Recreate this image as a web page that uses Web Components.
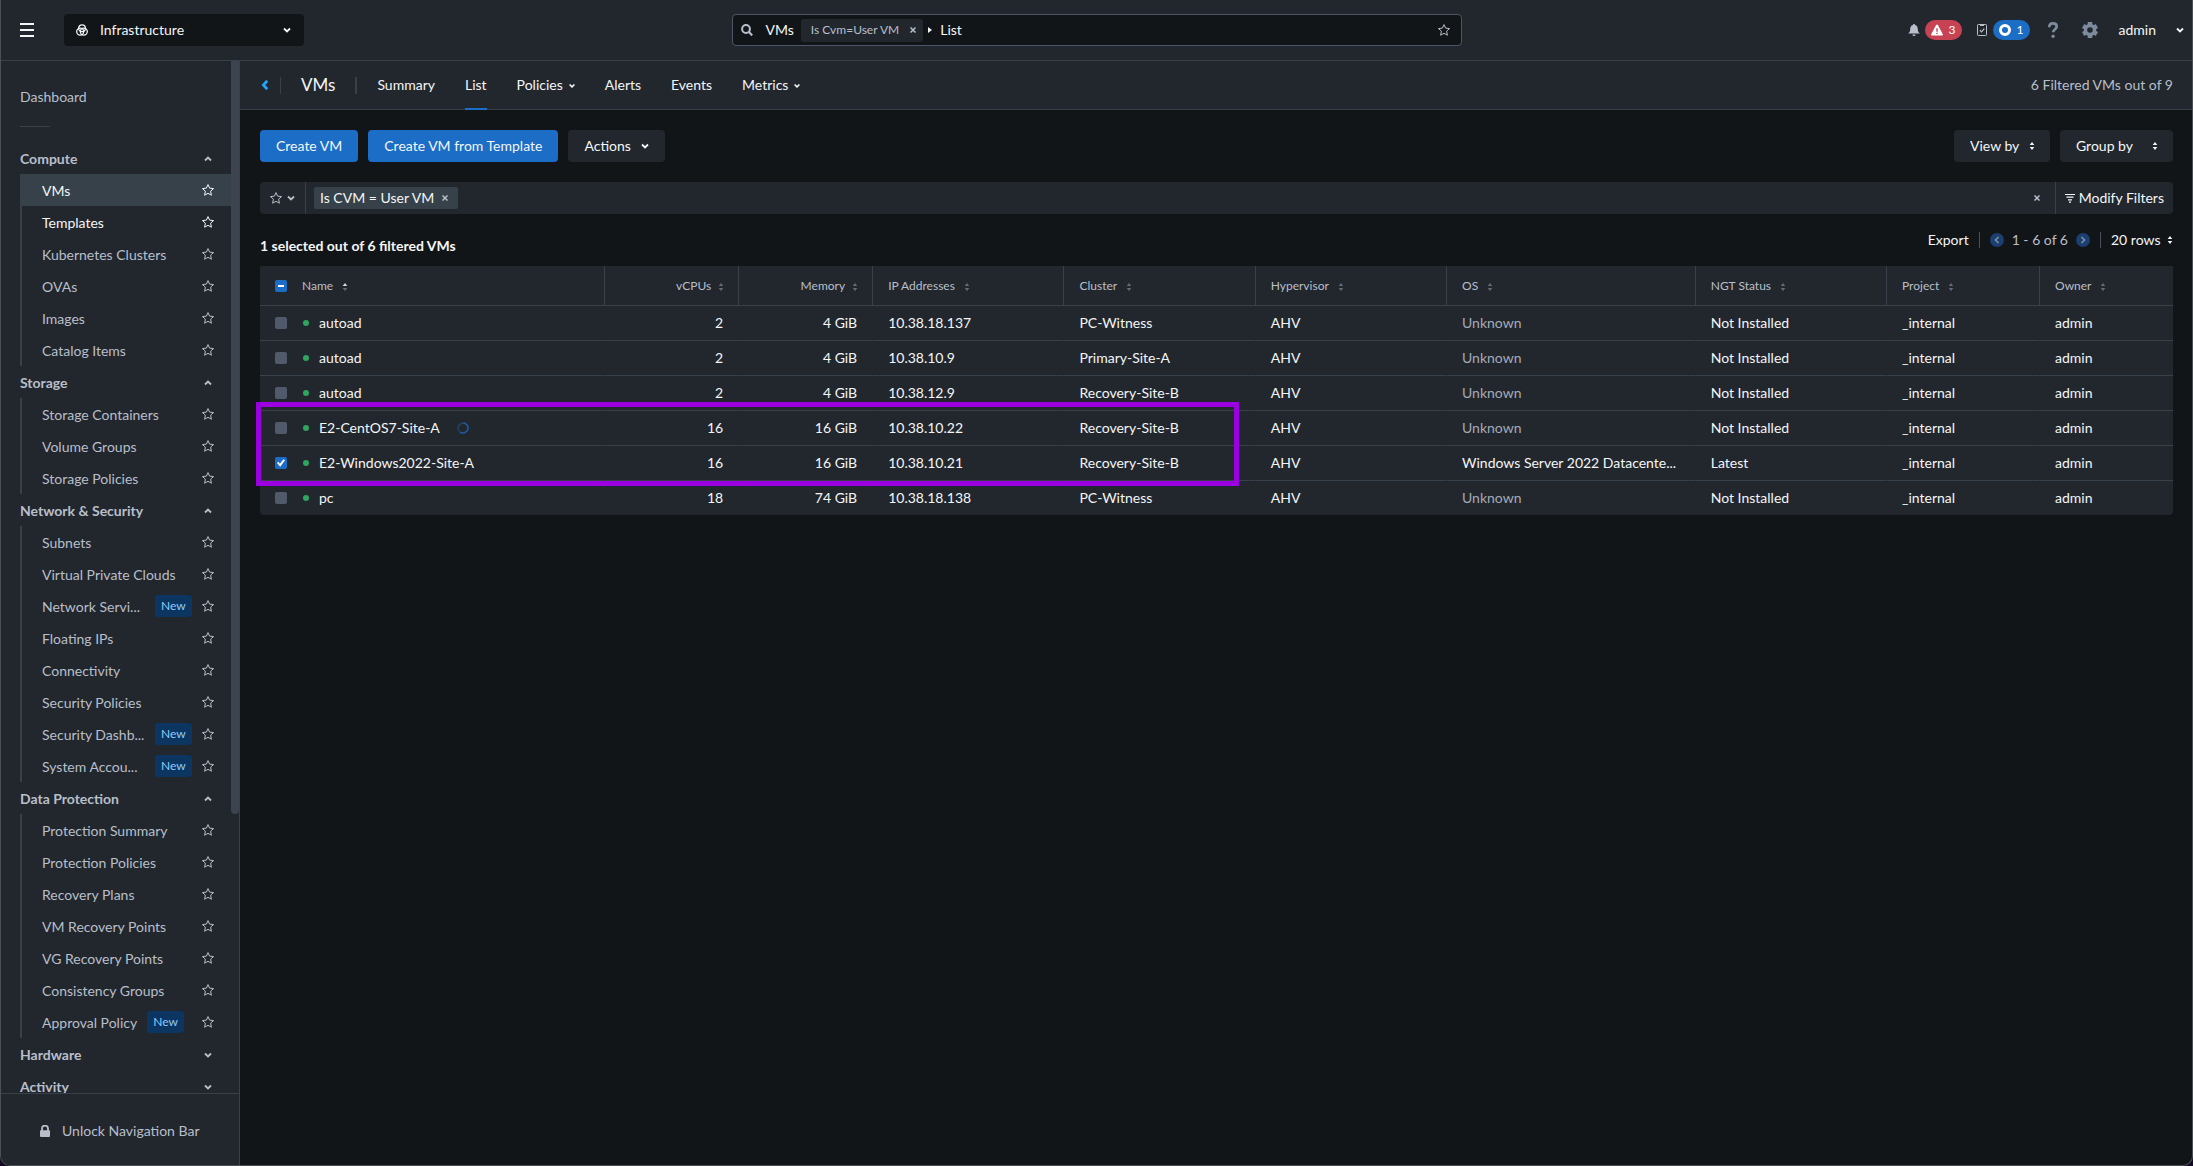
<!DOCTYPE html>
<html lang="en">
<head>
<meta charset="utf-8">
<title>VMs - List</title>
<style>
    :root {
        --bg: #121517;
        --panel: #22272e;
        --line: #38414a;
        --active: #36414a;
        --blue: #1b6dc6;
        --text: #f4f6f8;
        --muted: #b8bfca;
    }
    html {
        background: #150a24;
    }
    body {
        margin: 0;
        color: var(--text);
        font: 14px/20px Lato, "Liberation Sans", sans-serif;
    }
</style>
</head>
<body>
<infra-app></infra-app>

<script>
const ICONS = {
    menu: [14, '<path d="M0 1h14M0 7h14M0 13h14" stroke="currentColor" stroke-width="2"/>'],
    infra: [12, '<g fill="none" stroke="currentColor" stroke-width="1.3"><circle cx="6" cy="4.2" r="3.4"/><circle cx="4.200" cy="7.600" r="3.500"/><circle cx="7.800" cy="7.600" r="3.500"/></g>'],
    down: [8, '<path d="M1 2.5l3 3 3-3" fill="none" stroke="currentColor" stroke-width="1.8"/>'],
    up: [8, '<path d="M1 5.5l3-3 3 3" fill="none" stroke="currentColor" stroke-width="1.8"/>'],
    caret: [6, '<path d="M.6 2.5L3 4.900l2.400-2.400" fill="none" stroke="currentColor" stroke-width="1.6"/>'],
    back: [10, '<path d="M7.200.8L3.400 5l3.800 4.200" fill="none" stroke="currentColor" stroke-width="2.8"/>'],
    prev: [14, '<circle cx="7" cy="7" r="7" fill="#1b3f70"/><path d="M8.500 4l-3 3 3 3" fill="none" stroke="#8793a3" stroke-width="1.5"/>'],
    next: [14, '<circle cx="7" cy="7" r="7" fill="#1b3f70"/><path d="M5.500 4l3 3-3 3" fill="none" stroke="#8793a3" stroke-width="1.5"/>'],
    star: [12, '<path d="M6 .6l1.600 3.500 3.900.5-2.900 2.600.8 4L6 9.300l-3.400 1.900.8-4L.5 4.600l3.900-.5z" fill="none" stroke="currentColor" stroke-width="1" stroke-linejoin="round"/>'],
    search: [12, '<circle cx="5" cy="5" r="3.900" fill="none" stroke="currentColor" stroke-width="2"/><path d="M7.800 7.800l3.400 3.600" stroke="currentColor" stroke-width="2.2"/>'],
    close: [6, '<path d="M.5.5l5 5M5.500.5l-5 5" stroke="currentColor" stroke-width="1.5"/>'],
    play: [6, '<path d="M1 0l4 3-4 3z" fill="currentColor"/>'],
    bell: [12, '<path d="M6 0c.7 0 1 .4 1 .9C9 1.400 9.800 3 9.800 5c0 2.500.7 3.500 2.200 4.600H0C1.500 8.500 2.200 7.500 2.200 5 2.200 3 3 1.400 5 .9 5 .4 5.300 0 6 0zM4.400 10.400h3.200a1.600 1.600 0 0 1-3.200 0z" fill="currentColor"/>'],
    warn: [12, '<path d="M6 .5c.5 0 .8.3 1 .7l4.800 9c.4.7 0 1.300-.8 1.300H1c-.8 0-1.200-.6-.8-1.300l4.800-9c.2-.4.5-.7 1-.7z" fill="#fff"/><path d="M6 4.200v3.600M6 8.800v1.300" stroke="#c74354" stroke-width="1.4"/>'],
    task: [12, '<rect x="1.500" y=".5" width="9" height="11" rx=".8" fill="none" stroke="currentColor"/><path d="M4 1.500h4M3.800 6.200l1.700 1.700 2.800-3.300" fill="none" stroke="currentColor" stroke-width="1.2"/>'],
    ring: [12, '<circle cx="6" cy="6" r="4.500" fill="none" stroke="#fff" stroke-width="3"/>'],
    help: [16, '<path d="M4.300 5.200C4.300 2.800 5.600 1.400 8 1.400c2.300 0 3.700 1.200 3.700 3.100 0 2.700-3.500 2.800-3.500 5.800" fill="none" stroke="currentColor" stroke-width="2.7"/><circle cx="8.100" cy="14.200" r="1.700" fill="currentColor"/>'],
    gear: [16, '<path d="M8 0v16M1.100 4l13.800 8M14.900 4L1.100 12" stroke="currentColor" stroke-width="4.6"/><circle cx="8" cy="8" r="6.200" fill="currentColor"/><circle cx="8" cy="8" r="2.800" fill="#22272e"/>'],
    lock: [12, '<path d="M3 6V3.600a3 3 0 0 1 6 0V6" fill="none" stroke="currentColor" stroke-width="1.8"/><rect x="1" y="5.200" width="10" height="6.800" rx="1" fill="currentColor"/>'],
    sort: [8, '<path d="M4 0l2.300 3H1.700zM4 8l2.300-3H1.700z" fill="currentColor"/>'],
    sorted: [8, '<path d="M4 0l2.300 3H1.700z" fill="#d5dae2"/><path d="M4 8l2.300-3H1.700z" fill="#626b76"/>'],
    filter: [10, '<path d="M0 1.500h10M1.500 4.200h7M3 6.800h4M4 9.200h2" stroke="currentColor" stroke-width="1.2"/>'],
    spinner: [12, '<g fill="none" stroke-width="1.6"><path d="M6 1a5 5 0 0 0-3.500 8.500" stroke="#263f61"/><path d="M6 1a5 5 0 1 1-3 9" stroke="#1d5ba3"/></g>']
};

class UiIcon extends HTMLElement {
    constructor() {
        super();
        this.attachShadow({mode: 'open'});
    }
    connectedCallback() {
        const [size, body] = ICONS[this.getAttribute('name')];
        this.shadowRoot.innerHTML = `
            <style>
                :host { display: inline-flex; flex: none; }
                svg { display: block; }
            </style>
            <svg width="${size}" height="${size}" viewBox="0 0 ${size} ${size}" aria-hidden="true">${body}</svg>
        `;
    }
}

class UiButton extends HTMLElement {
    constructor() {
        super();
        this.attachShadow({mode: 'open'});
        this.shadowRoot.innerHTML = `
            <style>
                :host { display: inline-flex; }
                button {
                    all: unset;
                    display: flex;
                    align-items: center;
                    gap: 10px;
                    height: 32px;
                    padding: 0 16px;
                    border-radius: 4px;
                    background: var(--panel);
                    cursor: pointer;
                }
                :host([primary]) button { background: var(--blue); }
            </style>
            <button><slot></slot></button>
        `;
    }
}

/* native select with the arrows drawn beside its text */
class UiSelect extends HTMLElement {
    constructor() {
        super();
        this.attachShadow({mode: 'open'});
    }
    connectedCallback() {
        this.shadowRoot.innerHTML = `
            <style>
                :host { display: inline-grid; align-items: center; }
                select, ui-icon { grid-row: 1; grid-column: 1; }
                select {
                    appearance: none;
                    box-sizing: border-box;
                    width: 100%;
                    height: 32px;
                    margin: 0;
                    padding: var(--pad, 0 30px 0 16px);
                    border: 0;
                    border-radius: 4px;
                    background: var(--fill, var(--panel));
                    color: inherit;
                    font: inherit;
                }
                ui-icon { justify-self: end; margin-right: var(--arrow, 14px); pointer-events: none; }
            </style>
            <select aria-label="${this.getAttribute('label')}"><option>${this.getAttribute('value')}</option></select>
            <ui-icon name="${this.getAttribute('icon') || 'sort'}"></ui-icon>
        `;
    }
}

class TopBar extends HTMLElement {
    constructor() {
        super();
        this.attachShadow({mode: 'open'});
        this.shadowRoot.innerHTML = `
            <style>
                :host {
                    display: grid;
                    grid-template-columns: 1fr minmax(400px, 730px) 1fr;
                    align-items: center;
                    height: 60px;
                    background: var(--panel);
                    border-bottom: 1px solid var(--line);
                }
                button { all: unset; display: flex; align-items: center; cursor: pointer; }
                .left, .search, .right { display: flex; align-items: center; }
                .left { padding-left: 19px; gap: 30px; }
                .picker {
                    display: grid;
                    grid-template-columns: 36px 204px;
                    align-items: center;
                    background: var(--bg);
                    border-radius: 4px;
                }
                .picker > ui-icon { justify-self: end; margin-right: 12px; }
                .picker ui-select { --fill: transparent; --pad: 0; --arrow: 13px; }
                .search {
                    height: 30px;
                    padding: 0 11px 0 8px;
                    background: var(--bg);
                    border: 1px solid #4b5766;
                    border-radius: 4px;
                }
                .search > ui-icon:first-child, .fav { color: var(--muted); }
                .scope { margin: 0 7px 0 13px; }
                .chip {
                    display: flex;
                    align-items: center;
                    gap: 11px;
                    height: 23px;
                    margin-right: 4px;
                    padding: 0 7px 0 10px;
                    border-radius: 3px;
                    background: var(--panel);
                    color: var(--muted);
                    font-size: 12px;
                }
                input {
                    flex: 1;
                    min-width: 0;
                    margin-left: 7px;
                    padding: 0;
                    border: 0;
                    outline: 0;
                    background: none;
                    color: inherit;
                    font: inherit;
                }
                .right { justify-content: flex-end; padding-right: 8px; color: var(--muted); }
                .badge {
                    gap: 6px;
                    height: 20px;
                    margin: 0 14px 0 5px;
                    padding: 0 6px;
                    border-radius: 10px;
                    color: #fff;
                    font-size: 12px;
                }
                .alert { background: #c74354; }
                .tasks { background: var(--blue); margin-right: 15px; }
                .tool { margin-right: 21px; color: #7c8b9e; }
                .user { gap: 20px; color: var(--text); }
            </style>
            <div class="left">
                <button aria-label="Menu"><ui-icon name="menu"></ui-icon></button>
                <div class="picker">
                    <ui-icon name="infra"></ui-icon>
                    <ui-select label="Application" value="Infrastructure" icon="down"></ui-select>
                </div>
            </div>
            <div class="search">
                <ui-icon name="search"></ui-icon>
                <span class="scope">VMs</span>
                <span class="chip">Is Cvm=User VM <button aria-label="Remove filter"><ui-icon name="close"></ui-icon></button></span>
                <ui-icon name="play"></ui-icon>
                <input value="List" aria-label="Search">
                <button class="fav" aria-label="Save search"><ui-icon name="star"></ui-icon></button>
            </div>
            <div class="right">
                <ui-icon name="bell"></ui-icon>
                <button class="badge alert"><ui-icon name="warn"></ui-icon>3</button>
                <ui-icon name="task"></ui-icon>
                <button class="badge tasks"><ui-icon name="ring"></ui-icon>1</button>
                <button class="tool" aria-label="Help"><ui-icon name="help"></ui-icon></button>
                <button class="tool" aria-label="Settings"><ui-icon name="gear"></ui-icon></button>
                <button class="user">admin <ui-icon name="down"></ui-icon></button>
            </div>
        `;
    }
}

class NavItem extends HTMLElement {
    constructor() {
        super();
        this.attachShadow({mode: 'open'});
        this.shadowRoot.innerHTML = `
            <style>
                :host {
                    display: flex;
                    align-items: center;
                    height: 32px;
                    padding: 0 17px 0 20px;
                    border-left: 2px solid var(--line);
                    color: var(--muted);
                }
                :host([active]) { background: var(--active); color: var(--text); }
                :host([bright]) { color: var(--text); }
                a { padding-top: 2px; color: inherit; text-decoration: none; white-space: nowrap; }
                :host([cut]) a { width: 103px; }
                .new {
                    height: 22px;
                    margin-left: 10px;
                    padding: 0 6px;
                    border-radius: 3px;
                    background: #0c3561;
                    color: #8ecbfa;
                    font-size: 12px;
                    line-height: 22px;
                }
                button { all: unset; display: flex; margin-left: auto; cursor: pointer; }
            </style>
            <a href="#"><slot></slot></a>
            <span class="new">New</span>
            <button aria-label="Add to favourites"><ui-icon name="star"></ui-icon></button>
        `;
        if (!this.hasAttribute('new')) {
            this.shadowRoot.querySelector('.new').remove();
        }
    }
}

class NavGroup extends HTMLElement {
    constructor() {
        super();
        this.attachShadow({mode: 'open'});
    }
    connectedCallback() {
        const open = this.hasAttribute('open');
        this.shadowRoot.innerHTML = `
            <style>
                :host { display: block; color: var(--muted); }
                button {
                    all: unset;
                    box-sizing: border-box;
                    display: flex;
                    align-items: center;
                    justify-content: space-between;
                    width: 100%;
                    height: 32px;
                    padding: 2px 19px 0 0;
                    font-weight: bold;
                    cursor: pointer;
                }
            </style>
            <button aria-expanded="${open}">${this.getAttribute('label')} <ui-icon name="${open ? 'up' : 'down'}"></ui-icon></button>
            <slot></slot>
        `;
    }
}

class SideNav extends HTMLElement {
    constructor() {
        super();
        this.attachShadow({mode: 'open'});
        this.shadowRoot.innerHTML = `
            <style>
                :host {
                    display: flex;
                    flex-direction: column;
                    min-height: 0;
                    background: var(--panel);
                    border-right: 1px solid var(--line);
                    color: var(--muted);
                }
                .scroll { display: flex; flex: 1; min-height: 0; overflow: hidden; }
                nav { flex: 1; padding: 20px 0 0 19px; }
                nav > a { display: block; color: inherit; line-height: 32px; text-decoration: none; }
                hr { width: 30px; height: 1px; margin: 13px 0 15px; border: 0; background: var(--line); }
                .thumb { width: 8px; height: 73%; border-radius: 0 0 4px 4px; background: #3c4450; }
                button {
                    all: unset;
                    display: flex;
                    align-items: center;
                    gap: 11px;
                    height: 69px;
                    padding: 2px 0 0 38px;
                    border-top: 1px solid var(--line);
                    cursor: pointer;
                }
            </style>
            <div class="scroll">
                <nav>
                    <a href="#">Dashboard</a>
                    <hr>
                    <nav-group label="Compute" open>
                        <nav-item active>VMs</nav-item>
                        <nav-item bright>Templates</nav-item>
                        <nav-item>Kubernetes Clusters</nav-item>
                        <nav-item>OVAs</nav-item>
                        <nav-item>Images</nav-item>
                        <nav-item>Catalog Items</nav-item>
                    </nav-group>
                    <nav-group label="Storage" open>
                        <nav-item>Storage Containers</nav-item>
                        <nav-item>Volume Groups</nav-item>
                        <nav-item>Storage Policies</nav-item>
                    </nav-group>
                    <nav-group label="Network &amp; Security" open>
                        <nav-item>Subnets</nav-item>
                        <nav-item>Virtual Private Clouds</nav-item>
                        <nav-item new cut>Network Servi...</nav-item>
                        <nav-item>Floating IPs</nav-item>
                        <nav-item>Connectivity</nav-item>
                        <nav-item>Security Policies</nav-item>
                        <nav-item new cut>Security Dashb...</nav-item>
                        <nav-item new cut>System Accou...</nav-item>
                    </nav-group>
                    <nav-group label="Data Protection" open>
                        <nav-item>Protection Summary</nav-item>
                        <nav-item>Protection Policies</nav-item>
                        <nav-item>Recovery Plans</nav-item>
                        <nav-item>VM Recovery Points</nav-item>
                        <nav-item>VG Recovery Points</nav-item>
                        <nav-item>Consistency Groups</nav-item>
                        <nav-item new>Approval Policy</nav-item>
                    </nav-group>
                    <nav-group label="Hardware"></nav-group>
                    <nav-group label="Activity"></nav-group>
                </nav>
                <div class="thumb"></div>
            </div>
            <button><ui-icon name="lock"></ui-icon>Unlock Navigation Bar</button>
        `;
    }
}

class PageTabs extends HTMLElement {
    constructor() {
        super();
        this.attachShadow({mode: 'open'});
        this.shadowRoot.innerHTML = `
            <style>
                :host {
                    display: flex;
                    align-items: center;
                    height: 48px;
                    padding: 0 19px 0 20px;
                    background: var(--panel);
                    border-bottom: 1px solid var(--line);
                }
                button { all: unset; display: flex; color: #22a5f7; cursor: pointer; }
                .sep { width: 1px; height: 17px; background: var(--line); }
                .back { margin-right: 10px; }
                h1 { margin: 0 20px; font-size: 17px; font-weight: normal; }
                .wide { width: 2px; }
                nav { display: flex; gap: 30px; margin-left: 20px; height: 49px; }
                nav a {
                    display: flex;
                    align-items: center;
                    gap: 6px;
                    box-sizing: border-box;
                    height: 49px;
                    border-top: 2px solid transparent;
                    border-bottom: 2px solid transparent;
                    color: inherit;
                    text-decoration: none;
                }
                nav a[aria-current] { border-bottom-color: var(--blue); }
                .count { margin-left: auto; color: var(--muted); }
            </style>
            <button class="back" aria-label="Back"><ui-icon name="back"></ui-icon></button>
            <span class="sep"></span>
            <h1>VMs</h1>
            <span class="sep wide"></span>
            <nav>
                <a href="#">Summary</a>
                <a href="#" aria-current="page">List</a>
                <a href="#">Policies <ui-icon name="caret"></ui-icon></a>
                <a href="#">Alerts</a>
                <a href="#">Events</a>
                <a href="#">Metrics <ui-icon name="caret"></ui-icon></a>
            </nav>
            <span class="count">6 Filtered VMs out of 9</span>
        `;
    }
}

class FilterBar extends HTMLElement {
    constructor() {
        super();
        this.attachShadow({mode: 'open'});
        this.shadowRoot.innerHTML = `
            <style>
                :host {
                    display: flex;
                    align-items: center;
                    height: 32px;
                    border-radius: 4px;
                    background: var(--panel);
                }
                button { all: unset; display: flex; align-items: center; color: var(--muted); cursor: pointer; }
                .saved { gap: 5px; height: 32px; padding: 0 10px; border-right: 1px solid var(--line); }
                .chip {
                    display: flex;
                    align-items: center;
                    gap: 8px;
                    height: 22px;
                    margin-left: 8px;
                    padding: 0 10px 0 6px;
                    border-radius: 2px;
                    background: var(--active);
                }
                input { flex: 1; min-width: 0; border: 0; outline: 0; background: none; color: inherit; font: inherit; }
                .modify {
                    gap: 4px;
                    height: 32px;
                    margin-left: 15px;
                    padding: 0 9px;
                    border-left: 1px solid var(--line);
                    color: inherit;
                }
            </style>
            <button class="saved" aria-label="Saved filters"><ui-icon name="star"></ui-icon><ui-icon name="down"></ui-icon></button>
            <span class="chip">Is CVM = User VM <button aria-label="Remove"><ui-icon name="close"></ui-icon></button></span>
            <input aria-label="Filter">
            <button aria-label="Clear filters"><ui-icon name="close"></ui-icon></button>
            <button class="modify"><ui-icon name="filter"></ui-icon>Modify Filters</button>
        `;
    }
}

const COLUMNS = [
    ['Name', 18], ['vCPUs', 7], ['Memory', 7], ['IP Addresses', 10], ['Cluster', 10],
    ['Hypervisor', 10], ['OS', 13], ['NGT Status', 10], ['Project', 8], ['Owner', 7]
];

const VMS = [
    ['autoad', '2', '4 GiB', '10.38.18.137', 'PC-Witness', 'AHV', 'Unknown', 'Not Installed', '_internal', 'admin'],
    ['autoad', '2', '4 GiB', '10.38.10.9', 'Primary-Site-A', 'AHV', 'Unknown', 'Not Installed', '_internal', 'admin'],
    ['autoad', '2', '4 GiB', '10.38.12.9', 'Recovery-Site-B', 'AHV', 'Unknown', 'Not Installed', '_internal', 'admin'],
    ['E2-CentOS7-Site-A', '16', '16 GiB', '10.38.10.22', 'Recovery-Site-B', 'AHV', 'Unknown', 'Not Installed', '_internal', 'admin'],
    ['E2-Windows2022-Site-A', '16', '16 GiB', '10.38.10.21', 'Recovery-Site-B', 'AHV', 'Windows Server 2022 Datacente...', 'Latest', '_internal', 'admin'],
    ['pc', '18', '74 GiB', '10.38.18.138', 'PC-Witness', 'AHV', 'Unknown', 'Not Installed', '_internal', 'admin']
];
const BUSY = 3;
const SELECTED = 4;

class VmTable extends HTMLElement {
    constructor() {
        super();
        this.attachShadow({mode: 'open'});
        this.shadowRoot.innerHTML = `
            <style>
                :host { display: block; position: relative; }
                table {
                    width: 100%;
                    table-layout: fixed;
                    border-collapse: separate;
                    border-spacing: 0;
                    background: var(--panel);
                    border-radius: 0 0 4px 4px;
                }
                th, td {
                    box-sizing: border-box;
                    height: 35px;
                    padding: 0 15px;
                    text-align: left;
                    white-space: nowrap;
                    border-left: 1px solid transparent;
                    border-bottom: 1px solid var(--line);
                }
                th {
                    height: 40px;
                    border-left-color: var(--line);
                    color: var(--muted);
                    font-size: 12px;
                    font-weight: normal;
                }
                th:first-child, td:first-child { border-left: 0; }
                tr:last-child td { height: 34px; border-bottom: 0; }
                .cell { display: flex; align-items: center; }
                .num .cell { justify-content: flex-end; }
                th ui-icon { margin: 2px 0 0 8px; color: #626b76; }
                .num ui-icon { margin: 2px -2px 0 6px; }
                input {
                    appearance: none;
                    display: grid;
                    place-items: center;
                    width: 12px;
                    height: 12px;
                    margin: 0 15px 0 0;
                    border-radius: 2px;
                    background: #505a6a;
                }
                input:checked, input:indeterminate { background: var(--blue); }
                input:checked::after {
                    content: "";
                    width: 8px;
                    height: 8px;
                    background: #fff;
                    clip-path: polygon(0 50%, 18% 35%, 36% 58%, 80% 2%, 100% 16%, 40% 96%);
                }
                input:indeterminate::after { content: ""; width: 6px; height: 2px; background: #fff; }
                .dot { width: 6px; height: 6px; margin: 0 10px 0 1px; border-radius: 50%; background: #2fa55f; }
                .cell .busy { margin-left: 17px; }
                .unknown { color: #a3abb8; }
                .mark {
                    position: absolute;
                    top: 136px;
                    left: -4px;
                    box-sizing: border-box;
                    width: calc(51% + 7px);
                    height: 84px;
                    border: 5px solid #9a00e0;
                    pointer-events: none;
                }
            </style>
            <table>
                <colgroup>${COLUMNS.map(([, w]) => `<col style="width: ${w}%">`).join('')}</colgroup>
                <thead><tr>${COLUMNS.map(([name], i) => this.head(name, i)).join('')}</tr></thead>
                <tbody>${VMS.map((vm, r) => `<tr>${vm.map((v, i) => this.cell(v, i, r)).join('')}</tr>`).join('')}</tbody>
            </table>
            <div class="mark"></div>
        `;
        this.shadowRoot.querySelector('thead input').indeterminate = true;
    }
    numeric(i) {
        return i === 1 || i === 2 ? ' class="num"' : '';
    }
    head(name, i) {
        const box = i === 0 ? '<input type="checkbox" aria-label="Select all">' : '';
        return `<th${this.numeric(i)}><div class="cell">${box}${name}<ui-icon name="${i === 0 ? 'sorted' : 'sort'}"></ui-icon></div></th>`;
    }
    cell(value, i, row) {
        if (i === 0) {
            const checked = row === SELECTED ? 'checked' : '';
            const busy = row === BUSY ? '<ui-icon class="busy" name="spinner"></ui-icon>' : '';
            return `<td><div class="cell"><input type="checkbox" id="vm${row}" ${checked}><span class="dot"></span><label for="vm${row}">${value}</label>${busy}</div></td>`;
        }
        return value === 'Unknown' ? `<td class="unknown">${value}</td>` : `<td${this.numeric(i)}><div class="cell">${value}</div></td>`;
    }
}

class VmPage extends HTMLElement {
    constructor() {
        super();
        this.attachShadow({mode: 'open'});
        this.shadowRoot.innerHTML = `
            <style>
                :host { display: block; min-width: 0; }
                .body { padding: 20px 19px 0 20px; }
                .actions { display: flex; gap: 10px; margin-bottom: 20px; }
                .actions ui-select:first-of-type { margin-left: auto; }
                .actions ui-select:last-of-type { --pad: 0 40px 0 16px; }
                .status { display: flex; align-items: center; height: 52px; }
                .status p { margin: 11px auto 0 0; font-weight: bold; }
                .status button { all: unset; display: flex; cursor: pointer; }
                .sep { width: 1px; height: 16px; margin: 0 10px; background: #45505c; }
                .range { margin: 0 8px; color: var(--muted); }
                .status ui-select { --fill: transparent; --pad: 0 12px 0 0; --arrow: -1px; }
            </style>
            <page-tabs></page-tabs>
            <div class="body">
                <div class="actions">
                    <ui-button primary>Create VM</ui-button>
                    <ui-button primary>Create VM from Template</ui-button>
                    <ui-button>Actions <ui-icon name="down"></ui-icon></ui-button>
                    <ui-select label="View" value="View by"></ui-select>
                    <ui-select label="Group" value="Group by"></ui-select>
                </div>
                <filter-bar></filter-bar>
                <div class="status">
                    <p>1 selected out of 6 filtered VMs</p>
                    <button>Export</button>
                    <span class="sep"></span>
                    <button aria-label="Previous page"><ui-icon name="prev"></ui-icon></button>
                    <span class="range">1 - 6 of 6</span>
                    <button aria-label="Next page"><ui-icon name="next"></ui-icon></button>
                    <span class="sep"></span>
                    <ui-select label="Rows per page" value="20 rows"></ui-select>
                </div>
                <vm-table></vm-table>
            </div>
        `;
    }
}

class InfraApp extends HTMLElement {
    constructor() {
        super();
        this.attachShadow({mode: 'open'});
        this.shadowRoot.innerHTML = `
            <style>
                :host {
                    display: grid;
                    grid-template: auto 1fr / 239px 1fr;
                    box-sizing: border-box;
                    height: 100vh;
                    overflow: hidden;
                    background: var(--bg);
                    border: solid #4a5056;
                    border-width: 0 1px 1px;
                    border-radius: 0 0 10px 10px;
                }
                top-bar { grid-column: 1 / -1; }
            </style>
            <top-bar></top-bar>
            <side-nav></side-nav>
            <vm-page></vm-page>
        `;
    }
}

customElements.define("ui-icon", UiIcon);
customElements.define("ui-button", UiButton);
customElements.define("ui-select", UiSelect);
customElements.define("top-bar", TopBar);
customElements.define("nav-item", NavItem);
customElements.define("nav-group", NavGroup);
customElements.define("side-nav", SideNav);
customElements.define("page-tabs", PageTabs);
customElements.define("filter-bar", FilterBar);
customElements.define("vm-table", VmTable);
customElements.define("vm-page", VmPage);
customElements.define("infra-app", InfraApp);
</script>
</body>
</html>
